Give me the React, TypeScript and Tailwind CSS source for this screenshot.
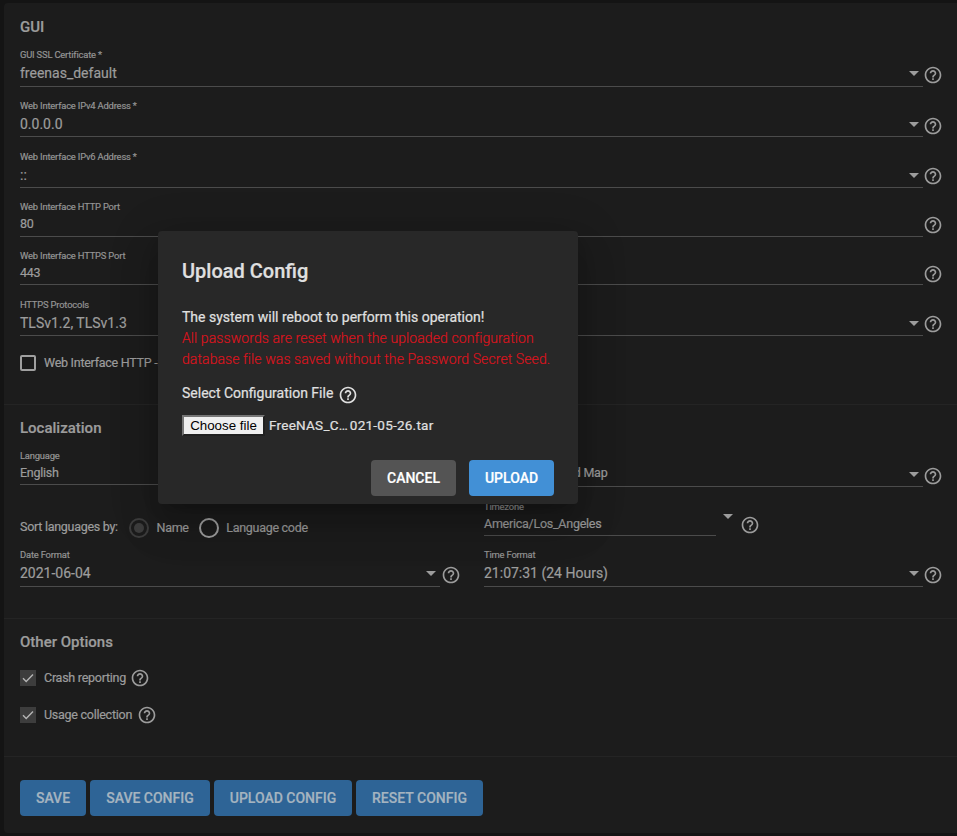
import type { ReactNode } from 'react';
import { MdHelpOutline } from 'react-icons/md';

function classNames(...classes: any) {
  return classes.filter(Boolean).join(' ');
}

function Help({ className }: { className?: string }) {
  return <MdHelpOutline className={classNames('size-5 shrink-0', className)} />;
}

function Arrow({ className }: { className?: string }) {
  return (
    <svg viewBox="0 0 10 5" className={classNames('h-[5px] w-[10px] shrink-0', className)}>
      <path d="M0 0h10L5 5z" fill="currentColor" />
    </svg>
  );
}

type FieldProps = {
  label?: string;
  value: string;
  select?: boolean;
  help?: boolean;
  className: string;
  valueClass?: string;
  helpClass?: string;
};

function Field({ label, value, select, help = true, className, valueClass, helpClass }: FieldProps) {
  return (
    <div className={classNames('flex', className)}>
      <div className="flex min-w-0 flex-1 flex-col border-b border-[#4b4b4b]">
        <div className="h-[13px] text-[9.4px] leading-[14px] tracking-[-0.18px] text-[#949494]">{label}</div>
        <div className="flex justify-between pr-1">
          <span className={classNames('whitespace-nowrap', valueClass || 'pt-[3px] text-sm leading-[18px]')}>
            {value}
          </span>
          {select && <Arrow className="mt-[10px]" />}
        </div>
      </div>
      <div className="w-5">{help && <Help className={helpClass || 'mt-[17px]'} />}</div>
    </div>
  );
}

function Check({ label, checked, help }: { label: string; checked?: boolean; help?: boolean }) {
  return (
    <div className="flex h-5 items-center">
      {checked ? (
        <span className="flex size-4 items-center justify-center bg-[#3d3d3d]">
          <svg viewBox="0 0 16 16" className="size-4">
            <path d="M3 8.2l3.2 3.2L13 4.5" fill="none" stroke="#b5b5b5" strokeWidth="1.4" />
          </svg>
        </span>
      ) : (
        <span className="size-4 rounded-[2px] border-2 border-[#a0a0a0]" />
      )}
      <span className="ml-2 whitespace-nowrap text-[12.5px] tracking-[-0.26px]">{label}</span>
      {help && <Help className="ml-[4.5px]" />}
    </div>
  );
}

function Button({ className, children }: { className: string; children: ReactNode }) {
  return (
    <button className={classNames('h-9 rounded-[4px] pb-px text-sm font-medium', className)}>{children}</button>
  );
}

const small = 'pt-[3px] text-[12.5px] leading-4 tracking-[-0.26px]';

function GuiSection() {
  return (
    <section className="h-[401px] pl-4 pr-[14px] pt-[14px]">
      <h3 className="mb-[11px] text-[15px] font-medium leading-5">GUI</h3>
      <Field label="GUI SSL Certificate *" value="freenas_default" select className="mb-3 h-[39px]" />
      <Field label="Web Interface IPv4 Address *" value="0.0.0.0" select className="mb-[13px] h-[38px]" />
      <Field label="Web Interface IPv6 Address *" value="::" select className="mb-3 h-[38px]" helpClass="mt-4" />
      <Field label="Web Interface HTTP Port" value="80" className="mb-3 h-[37px]" valueClass={small} helpClass="mt-[15px]" />
      <Field label="Web Interface HTTPS Port" value="443" className="mb-[13px] h-9" valueClass={small} helpClass="mt-[15px]" />
      <Field label="HTTPS Protocols" value="TLSv1.2, TLSv1.3" select className="mb-[17px] h-[38px]" helpClass="mt-4" />
      <Check label="Web Interface HTTP -> HTTPS Redirect" help />
    </section>
  );
}

function LocalizationSection() {
  return (
    <section className="h-[214px] border-t border-[#242424] pl-4 pr-[14px] pt-[13px]">
      <h3 className="mb-[11px] text-[15px] font-medium leading-5">Localization</h3>
      <div className="flex gap-6">
        <div className="w-[440px]">
          <Field label="Language" value="English" select className="h-9" valueClass={small} />
          <div className="mb-[10px] mt-[33px] flex h-5 items-center text-[12.5px] tracking-[-0.28px]">
            <span className="w-[109px] whitespace-nowrap pb-px">Sort languages by:</span>
            <span className="flex size-5 items-center justify-center rounded-full border-2 border-[#3d3d3d]">
              <span className="size-[10px] rounded-full bg-[#3d3d3d]" />
            </span>
            <span className="ml-[7.5px]">Name</span>
            <span className="ml-[10px] size-5 rounded-full border-2 border-[#a0a0a0]" />
            <span className="ml-[7.5px]">Language code</span>
          </div>
          <Field
            label="Date Format"
            value="2021-06-04"
            select
            className="h-[39px]"
            helpClass="ml-[0.5px] mt-[17px]"
          />
        </div>
        <div className="min-w-0 flex-1">
          <Field value="Console Keyboard Map" select className="mb-[13px] h-[38px]" valueClass={small} />
          <div className="mb-3 flex">
            <Field label="Timezone" value="America/Los_Angeles" help={false} className="h-9 w-[252px]" valueClass={small} />
            <Arrow className="-ml-[13px] mt-[14px]" />
            <Help className="ml-[7px] mt-[15px]" />
          </div>
          <Field label="Time Format" value="21:07:31 (24 Hours)" select className="h-[39px]" />
        </div>
      </div>
    </section>
  );
}

function UploadDialog() {
  return (
    <div
      role="dialog"
      className="absolute left-[158px] top-[231px] h-[273px] w-[420px] rounded-[4px] bg-[#282828] px-6 pt-7 text-[#e0e0e0] shadow-[0_11px_15px_-7px_rgba(0,0,0,0.2),0_24px_38px_3px_rgba(0,0,0,0.14),0_9px_46px_8px_rgba(0,0,0,0.12)]"
    >
      <h2 className="text-xl font-medium leading-6">Upload Config</h2>
      <p className="mt-6 text-sm leading-[21px]">The system will reboot to perform this operation!</p>
      <p className="whitespace-nowrap text-sm font-light leading-[21px] tracking-[0.09px] text-[#d9141e]">
        All passwords are reset when the uploaded configuration
        <br />
        database file was saved without the Password Secret Seed.
      </p>
      <div className="mt-[13px] flex h-5 items-center text-sm">
        Select Configuration File
        <Help className="ml-[5px] mt-1" />
      </div>
      <div className="mt-3 flex h-[21px] items-center text-[13.33px]">
        <button className="h-[21px] w-[83px] border-2 border-b-[#202020] border-l-[#767676] border-r-[#202020] border-t-[#767676] bg-[#efefef] font-['Liberation_Sans',sans-serif] leading-[17px] text-black [-webkit-text-stroke:0]">
          Choose file
        </button>
        <span className="ml-1 whitespace-nowrap text-[13.5px] tracking-[0.25px]">
          FreeNAS_C<span className="tracking-[2px]">…</span>021-05-26.tar
        </span>
      </div>
      <div className="mt-6 flex justify-end gap-[13px]">
        <Button className="w-[85px] bg-[#545454] text-white">CANCEL</Button>
        <Button className="w-[85px] bg-[#4290d6] text-white">UPLOAD</Button>
      </div>
    </div>
  );
}

export default function App() {
  return (
    <div className="relative h-[836px] w-[957px] overflow-hidden bg-[#141414] pl-1 pt-[3px] font-[Roboto,sans-serif] text-[#9c9c9c] [-webkit-text-stroke:0.2px]">
      <div className="h-[830px] rounded-l-[4px] bg-[#1c1c1c]">
        <GuiSection />
        <LocalizationSection />
        <section className="h-[138px] border-t border-[#242424] pl-4 pt-[13px]">
          <h3 className="mb-4 text-[15px] font-medium leading-5">Other Options</h3>
          <Check label="Crash reporting" checked help />
          <div className="h-[17px]" />
          <Check label="Usage collection" checked help />
        </section>
        <div className="flex gap-1 border-t border-[#242424] pl-4 pt-[23px] text-[#a5b4c0]">
          <Button className="w-[66px] bg-[#2e6496]">SAVE</Button>
          <Button className="w-[120px] bg-[#2e6496]">SAVE CONFIG</Button>
          <Button className="w-[138px] bg-[#2e6496]">UPLOAD CONFIG</Button>
          <Button className="w-[127px] bg-[#2e6496]">RESET CONFIG</Button>
        </div>
      </div>
      <UploadDialog />
    </div>
  );
}
